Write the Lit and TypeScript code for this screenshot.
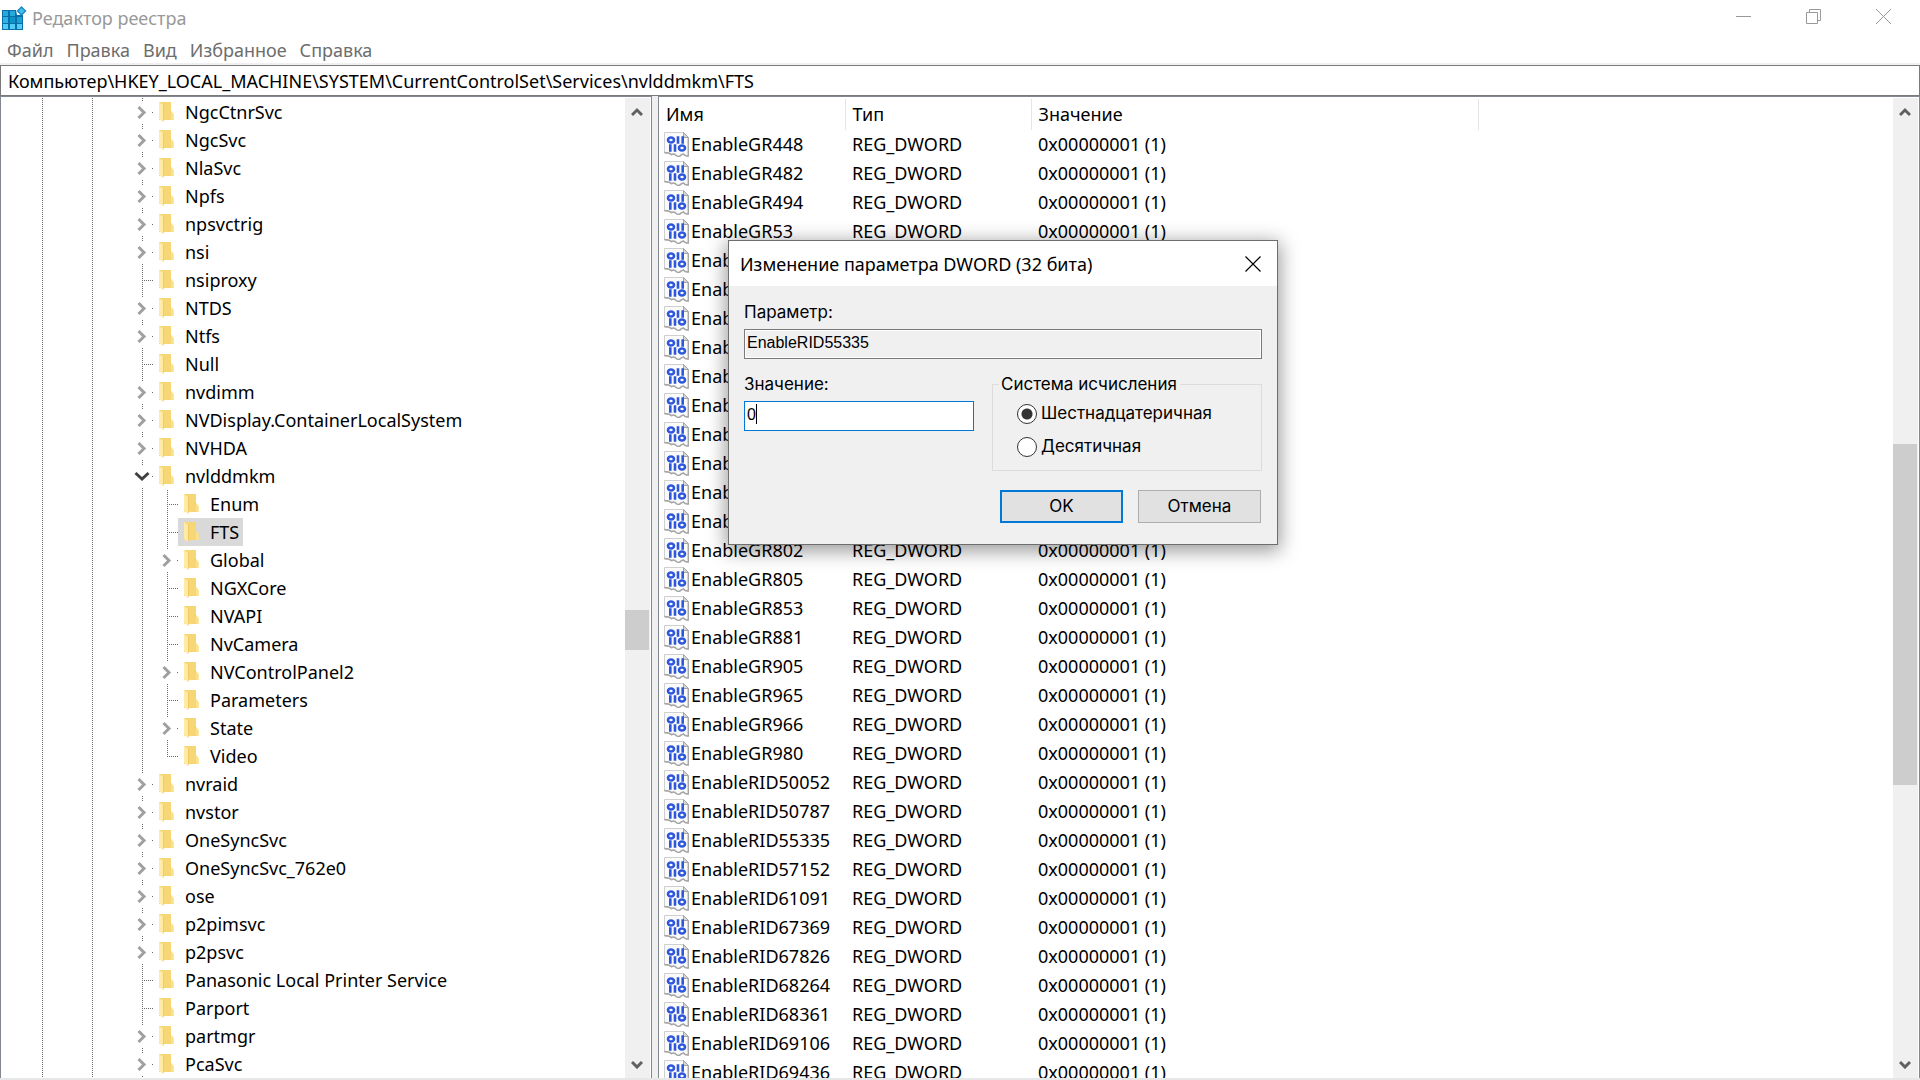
import { LitElement, html, css, svg, nothing } from "lit";
import { customElement, property, state } from "lit/decorators.js";
import { classMap } from "lit/directives/class-map.js";
import { styleMap } from "lit/directives/style-map.js";

type Toggle = "closed" | "open" | "leaf";

interface TreeNode {
  name: string;
  toggle: Toggle;
  depth: number;
  last?: boolean;
}

const node = (name: string, toggle: Toggle = "closed", depth = 0, last = false): TreeNode => ({
  name,
  toggle,
  depth,
  last,
});

const TREE: TreeNode[] = [
  node("NgcCtnrSvc"),
  node("NgcSvc"),
  node("NlaSvc"),
  node("Npfs"),
  node("npsvctrig"),
  node("nsi"),
  node("nsiproxy", "leaf"),
  node("NTDS"),
  node("Ntfs"),
  node("Null", "leaf"),
  node("nvdimm"),
  node("NVDisplay.ContainerLocalSystem"),
  node("NVHDA"),
  node("nvlddmkm", "open"),
  node("Enum", "leaf", 1),
  node("FTS", "leaf", 1),
  node("Global", "closed", 1),
  node("NGXCore", "leaf", 1),
  node("NVAPI", "leaf", 1),
  node("NvCamera", "leaf", 1),
  node("NVControlPanel2", "closed", 1),
  node("Parameters", "leaf", 1),
  node("State", "closed", 1),
  node("Video", "leaf", 1, true),
  node("nvraid"),
  node("nvstor"),
  node("OneSyncSvc"),
  node("OneSyncSvc_762e0"),
  node("ose"),
  node("p2pimsvc"),
  node("p2psvc"),
  node("Panasonic Local Printer Service", "leaf"),
  node("Parport", "leaf"),
  node("partmgr"),
  node("PcaSvc"),
];

const VALUES: string[] = [
  "EnableGR448", "EnableGR482", "EnableGR494", "EnableGR53", "EnableGR535",
  "EnableGR558", "EnableGR593", "EnableGR611", "EnableGR637", "EnableGR670",
  "EnableGR703", "EnableGR726", "EnableGR751", "EnableGR786", "EnableGR802",
  "EnableGR805", "EnableGR853", "EnableGR881", "EnableGR905", "EnableGR965",
  "EnableGR966", "EnableGR980", "EnableRID50052", "EnableRID50787",
  "EnableRID55335", "EnableRID57152", "EnableRID61091", "EnableRID67369",
  "EnableRID67826", "EnableRID68264", "EnableRID68361", "EnableRID69106",
  "EnableRID69436",
];

const folderIcon = html`<svg class="folder" width="16" height="20" viewBox="0 0 16 20" aria-hidden="true">
  <path d="M0 0h12v9l2.500 3v6H0z" fill="#f7d675" />
  <path d="M12 9l2.500 3v6H12z" fill="#fde08a" />
  <path d="M0 0l4 3v17l-4-3z" fill="#ffeaa6" />
  <path d="M4 3v17l1-2V3z" fill="#efcb68" />
</svg>`;

const dwordIcon = html`<svg class="dword" width="25" height="25" viewBox="0 0 25 25" aria-hidden="true">
  <path d="M.5.5h19l5 5v18.500q-3 .5-5-2-3 1-4 3-3 0-4-2-2-1-4 0-2-2-7-2z" fill="#fbfbfb" stroke="#cfcfcf" />
  <path d="M24.300 6v18q-3 .5-5-2-3 1-4 2.500-3 0-4-2-2-1-4 0-2-2-7-2" fill="none" stroke="#a6a6a6" stroke-width="1.500" />
  <path d="M19.500.5v5h5z" fill="#d6d6d6" stroke="#a6a6a6" />
  <g fill="none" stroke="#2e57dc" stroke-width="2.600">
    <ellipse cx="7" cy="8" rx="3" ry="2.500" />
    <path d="M14 4.300v7.400M18.700 4.300v7.400M6.300 12.300v7.400M11 12.300v7.400" />
    <ellipse cx="18" cy="16" rx="3" ry="2.500" />
  </g>
</svg>`;

const appIcon = html`<svg class="app-icon" width="25" height="25" viewBox="0 0 25 25" aria-hidden="true">
  <path d="M0 4h14l1 5h6v15H0z" fill="#0a6fa6" />
  <g>
    <path d="M1 5h5v5H1zM8 5h5v5H8z" fill="#27a9dd" />
    <path d="M1 11h5v6H1z" fill="#2fb4e8" />
    <path d="M8 11h5v6H8z" fill="#0e93c9" />
    <path d="M15 11h5v6h-5z" fill="#1a9fd6" />
    <path d="M1 18h5v5H1zM8 18h5v5H8zM15 18h5v5h-5z" fill="#4fcdf8" />
  </g>
  <path d="M19.500 0l5 5-5 5-5-5z" fill="#1a8cc4" />
  <path d="M19.500 2l3 3-3 3-3-3z" fill="#41bdec" />
</svg>`;

@customElement("reg-scrollbar")
export class RegScrollbar extends LitElement {
  @property({ type: Number }) before = 0;
  @property({ type: Number }) thumb = 0;
  @property({ type: Number }) after = 0;

  static styles = css`
    :host {
      display: flex;
      flex-direction: column;
      width: 25px;
      background: #f0f0f0;
    }
    .arrow {
      display: flex;
      align-items: center;
      justify-content: center;
      flex: none;
      height: 28px;
      margin: 0;
      padding: 0 1px 0 0;
      border: 0;
      background: none;
    }
    .track {
      display: flex;
      flex-direction: column;
      flex: 1;
      min-height: 0;
    }
    .thumb {
      margin-right: 1px;
      background: #cdcdcd;
    }
  `;

  render() {
    const grow = (n: number) => styleMap({ flex: `${n} 1 0` });
    return html`
      <button class="arrow" type="button" aria-label="Прокрутить вверх">
        <svg width="12" height="10" viewBox="0 0 12 10"><path d="M1 8l5-5 5 5" fill="none" stroke="#606060" stroke-width="3" /></svg>
      </button>
      <div class="track">
        <div style=${grow(this.before)}></div>
        <div class="thumb" style=${grow(this.thumb)}></div>
        <div style=${grow(this.after)}></div>
      </div>
      <button class="arrow" type="button" aria-label="Прокрутить вниз">
        <svg width="12" height="10" viewBox="0 0 12 10"><path d="M1 3l5 5 5-5" fill="none" stroke="#606060" stroke-width="3" /></svg>
      </button>
    `;
  }
}

@customElement("reg-tree")
export class RegTree extends LitElement {
  @state() private selected = "FTS";

  static styles = css`
    :host {
      display: block;
      overflow: hidden;
      padding-top: 1px;
    }
    .list {
      margin: 0;
      padding: 0;
      list-style: none;
    }
    .row {
      display: flex;
      height: 28px;
    }
    .guides {
      flex: none;
    }
    .folder {
      flex: none;
    }
    .key {
      display: flex;
      align-items: center;
      gap: 10px;
      height: 28px;
      margin: 0;
      padding: 0 4px 0 6px;
      border: 0;
      background: none;
      color: #000;
      font: inherit;
      line-height: 28px;
      white-space: nowrap;
    }
    .key.selected {
      background: #d9d9d9;
    }
  `;

  private guides(n: TreeNode) {
    const x = 141 + n.depth * 25;
    const width = x + 11;
    const dotted = (d: string) => svg`<path d=${d} fill="none" stroke="#6a6a6a" stroke-width="1" stroke-dasharray="1 1" />`;
    const rails = [41, 91, ...(n.depth ? [141] : [])].map((r) => dotted(`M${r + 0.5} 0v28`));
    const chevron =
      n.toggle === "closed"
        ? svg`<path d="M${x - 3.5} 9l5.500 5.500-5.500 5.500" fill="none" stroke="#a0a0a0" stroke-width="3" />`
        : svg`<path d="M${x - 6.5} 11l6.500 6 6.500-6" fill="none" stroke="#404040" stroke-width="3" />`;
    return html`<svg class="guides" width=${width} height="28" viewBox="0 0 ${width} 28" aria-hidden="true">
      ${rails}
      ${n.toggle === "leaf"
        ? svg`${dotted(`M${x + 0.5} 0v${n.last ? 15 : 28}`)}${dotted(`M${x + 2} 14.500h11`)}`
        : svg`${dotted(`M${x + 0.5} 0v3`)}${dotted(`M${x + 0.5} 26v2`)}${chevron}
            <path d="M${x + 10} 14.500h1" stroke="#6a6a6a" />`}
    </svg>`;
  }

  render() {
    return html`<ul class="list">
      ${TREE.map(
        (n) => html`<li class="row">
          ${this.guides(n)}
          <button
            type="button"
            class=${classMap({ key: true, selected: n.name === this.selected })}
            @click=${() => (this.selected = n.name)}
          >
            ${folderIcon}<span>${n.name}</span>
          </button>
        </li>`
      )}
    </ul>`;
  }
}

@customElement("reg-values")
export class RegValues extends LitElement {
  static styles = css`
    :host {
      display: block;
      overflow: hidden;
      padding-top: 2px;
    }
    .table {
      width: 100%;
      border-collapse: collapse;
      table-layout: fixed;
    }
    .c-name,
    .c-type {
      width: 186px;
    }
    .c-data {
      width: 447px;
    }
    th,
    td {
      height: 29px;
      padding: 0 0 0 7px;
      font-weight: 400;
      line-height: 29px;
      text-align: left;
      white-space: nowrap;
    }
    th {
      height: 31px;
      border-right: 1px solid #e5e5e5;
    }
    th:last-child {
      border-right: 0;
    }
    td:first-child {
      padding-left: 5px;
    }
    .cell {
      display: flex;
      align-items: center;
      gap: 2px;
    }
    .dword {
      flex: none;
    }
  `;

  render() {
    return html`<table class="table">
      <colgroup>
        <col class="c-name" />
        <col class="c-type" />
        <col class="c-data" />
        <col />
      </colgroup>
      <thead>
        <tr>
          <th scope="col">Имя</th>
          <th scope="col">Тип</th>
          <th scope="col">Значение</th>
          <th></th>
        </tr>
      </thead>
      <tbody>
        ${VALUES.map(
          (name) => html`<tr>
            <td><div class="cell">${dwordIcon}<span>${name}</span></div></td>
            <td>REG_DWORD</td>
            <td>0x00000001 (1)</td>
            <td></td>
          </tr>`
        )}
      </tbody>
    </table>`;
  }
}

@customElement("dword-dialog")
export class DwordDialog extends LitElement {
  @state() private base = "hex";

  static styles = css`
    :host {
      display: block;
      border: 1px solid #6e6e6e;
      background: #f0f0f0;
      box-shadow: 0 4px 18px 2px rgba(0, 0, 0, 0.4);
    }
    .bar {
      display: flex;
      align-items: center;
      justify-content: space-between;
      height: 45px;
      padding: 0 16px 0 11px;
      background: #fff;
    }
    .title {
      margin: 0;
      font-size: 18px;
      font-weight: 400;
    }
    .close {
      display: flex;
      padding: 0;
      border: 0;
      background: none;
    }
    .form {
      display: flex;
      flex-direction: column;
      padding: 16px 15px 21px 15px;
      font-family: Inter, "Liberation Sans", sans-serif;
      font-size: 17px;
      line-height: 21px;
    }
    .field {
      display: flex;
      flex-direction: column;
      gap: 6px;
    }
    .text {
      box-sizing: border-box;
      width: 100%;
      height: 30px;
      margin: 0;
      padding: 0 1px 2px 2px;
      border: 1px solid #7a7a7a;
      border-radius: 0;
      outline: none;
      color: #000;
      font: 16px "Liberation Sans", sans-serif;
    }
    .readonly {
      background: #f0f0f0;
      box-shadow: inset 0 0 0 1px #fff;
    }
    .entry {
      border-color: #0078d7;
      background: #fff;
      caret-color: transparent;
    }
    .entry-box {
      position: relative;
      display: flex;
    }
    .caret {
      position: absolute;
      top: 3px;
      left: 12px;
      width: 1px;
      height: 20px;
      background: #000;
    }
    .columns {
      display: flex;
      justify-content: space-between;
      margin-top: 15px;
    }
    .value {
      flex: 0 0 230px;
    }
    .group {
      box-sizing: border-box;
      flex: 0 0 270px;
      height: 97px;
      margin: 0;
      padding: 2px 0 0 24px;
      border: 1px solid #dcdcdc;
    }
    .legend {
      margin-left: -18px;
      padding: 0 3px 0 2px;
    }
    .option {
      display: flex;
      align-items: center;
      gap: 4px;
      height: 33px;
    }
    .radio {
      appearance: none;
      box-sizing: border-box;
      width: 20px;
      height: 20px;
      margin: 0;
      border: 1px solid #333;
      border-radius: 50%;
      background: #fff;
    }
    .radio:checked {
      background: radial-gradient(circle, #333 0 5px, #fff 6px);
    }
    .actions {
      display: flex;
      justify-content: flex-end;
      gap: 15px;
      margin-top: 19px;
      padding-right: 1px;
    }
    .button {
      box-sizing: border-box;
      width: 123px;
      height: 33px;
      padding: 0;
      border: 1px solid #adadad;
      background: #e1e1e1;
      color: #000;
      font: inherit;
    }
    .primary {
      border: 2px solid #0078d7;
    }
  `;

  private option(id: string, label: string) {
    return html`<div class="option">
      <input
        class="radio"
        type="radio"
        name="base"
        id=${id}
        .checked=${this.base === id}
        @change=${() => (this.base = id)}
      />
      <label for=${id}>${label}</label>
    </div>`;
  }

  render() {
    return html`
      <header class="bar">
        <h2 class="title">Изменение параметра DWORD (32 бита)</h2>
        <button class="close" type="button" aria-label="Закрыть">
          <svg width="16" height="16" viewBox="0 0 16 16"><path d="M.5.5l15 15M15.500.5l-15 15" stroke="#000" stroke-width="1.200" /></svg>
        </button>
      </header>
      <form class="form" @submit=${(e: Event) => e.preventDefault()}>
        <div class="field">
          <label for="param">Параметр:</label>
          <input class="text readonly" id="param" type="text" readonly value="EnableRID55335" />
        </div>
        <div class="columns">
          <div class="field value">
            <label for="value">Значение:</label>
            <div class="entry-box">
              <input class="text entry" id="value" type="text" value="0" />
              <span class="caret"></span>
            </div>
          </div>
          <fieldset class="group">
            <legend class="legend">Система исчисления</legend>
            ${this.option("hex", "Шестнадцатеричная")} ${this.option("dec", "Десятичная")}
          </fieldset>
        </div>
        <div class="actions">
          <button class="button primary" type="submit">OK</button>
          <button class="button" type="button">Отмена</button>
        </div>
      </form>
    `;
  }
}

@customElement("app-root")
export class AppRoot extends LitElement {
  @state() private dialogOpen = true;

  static styles = css`
    :host {
      position: relative;
      display: flex;
      flex-direction: column;
      height: 100vh;
      overflow: hidden;
      background: #fff;
      color: #000;
      font-family: "Noto Sans", "Open Sans", sans-serif;
      font-size: 18px;
    }
    .titlebar {
      display: flex;
      align-items: center;
      flex: none;
      height: 36px;
      padding: 0 14px 0 2px;
      color: #999;
    }
    .title {
      flex: 1;
      margin: 0 0 0 5px;
      font-size: 18px;
      font-weight: 400;
    }
    .controls {
      display: flex;
      gap: 25px;
      padding-bottom: 4px;
    }
    .control {
      display: flex;
      justify-content: center;
      width: 45px;
      padding: 0;
      border: 0;
      background: none;
    }
    .menu {
      display: flex;
      flex: none;
      gap: 13px;
      height: 27px;
      padding: 0 7px;
      border-bottom: 2px solid #f0f0f0;
    }
    .menu-item {
      padding: 0;
      border: 0;
      background: none;
      color: #6d6d6d;
      font: inherit;
      line-height: 28px;
    }
    .address {
      box-sizing: border-box;
      flex: none;
      width: 100%;
      height: 31px;
      margin: 0;
      padding: 0 7px;
      border: 1px solid #7a7a7a;
      border-radius: 0;
      outline: none;
      color: #000;
      font: inherit;
    }
    .panes {
      display: grid;
      grid-template-columns: 163fr 317fr;
      grid-template-rows: minmax(0, 1fr);
      flex: 1;
      min-height: 0;
      background: #f0f0f0;
      border-bottom: 2px solid #e6e7e8;
    }
    .pane {
      display: flex;
      min-width: 0;
      padding: 0 1px 0 0;
      border: 1px solid #828790;
      border-bottom: 0;
      background: #fff;
    }
    .list-pane {
      margin-left: 6px;
    }
    .content {
      flex: 1;
      min-width: 0;
    }
    .bar {
      flex: none;
      margin-top: 1px;
    }
    .dialog {
      position: absolute;
      top: 240px;
      left: 728px;
      width: 548px;
    }
  `;

  render() {
    return html`
      <header class="titlebar">
        ${appIcon}
        <h1 class="title">Редактор реестра</h1>
        <div class="controls">
          <button class="control" type="button" aria-label="Свернуть">
            <svg width="15" height="15" viewBox="0 0 15 15"><path d="M0 7.500h15" stroke="#999" /></svg>
          </button>
          <button class="control" type="button" aria-label="Восстановить">
            <svg width="15" height="15" viewBox="0 0 15 15"><path d="M.5 3.500h11v11H.5zM3.500 3.500v-3h11v11h-3" fill="none" stroke="#999" /></svg>
          </button>
          <button class="control" type="button" aria-label="Закрыть">
            <svg width="15" height="15" viewBox="0 0 15 15"><path d="M0 0l15 15M15 0L0 15" stroke="#999" /></svg>
          </button>
        </div>
      </header>
      <nav class="menu">
        ${["Файл", "Правка", "Вид", "Избранное", "Справка"].map(
          (m) => html`<button class="menu-item" type="button">${m}</button>`
        )}
      </nav>
      <input
        class="address"
        type="text"
        aria-label="Адрес"
        value="Компьютер\\HKEY_LOCAL_MACHINE\\SYSTEM\\CurrentControlSet\\Services\\nvlddmkm\\FTS"
      />
      <main class="panes">
        <section class="pane">
          <reg-tree class="content"></reg-tree>
          <reg-scrollbar class="bar" .before=${484} .thumb=${40} .after=${400}></reg-scrollbar>
        </section>
        <section class="pane list-pane">
          <reg-values class="content"></reg-values>
          <reg-scrollbar class="bar" .before=${318} .thumb=${341} .after=${265}></reg-scrollbar>
        </section>
      </main>
      ${this.dialogOpen
        ? html`<dword-dialog class="dialog" role="dialog" aria-label="Изменение параметра DWORD (32 бита)"></dword-dialog>`
        : nothing}
    `;
  }
}
